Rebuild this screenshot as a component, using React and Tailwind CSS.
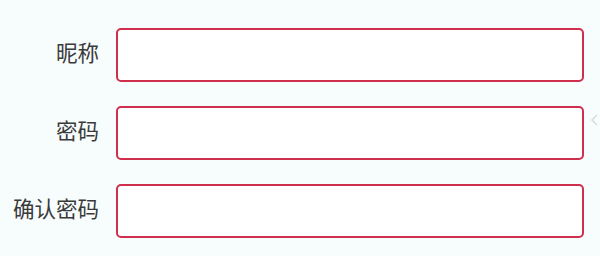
import React from 'react';

const fields = [
  { key: 'nickname', label: '昵称', type: 'text' },
  { key: 'password', label: '密码', type: 'password' },
  { key: 'confirm', label: '确认密码', type: 'password' },
];

export default function App() {
  return (
    <div
      className="relative w-[600px] h-[256px] overflow-hidden bg-[#f7fcfd] pt-[28px]"
      style={{ fontFamily: '"Noto Sans CJK SC", "Noto Sans", sans-serif' }}
    >
      <form className="flex flex-col gap-[24px]">
        {fields.map((f) => (
          <div key={f.key} className="flex items-center">
            <label className="w-[99px] pb-[6px] text-right text-[21.5px] leading-none font-normal text-[#3a3a3a]">
              {f.label}
            </label>
            <input
              type={f.type}
              className="ml-[17px] w-[468px] h-[54px] rounded-[5px] border-2 border-[#cf2f4d] bg-white px-3 text-[18px] outline-none"
            />
          </div>
        ))}
      </form>

      {/* small collapse arrow at the right edge */}
      <svg
        className="absolute left-[590px] top-[114px]"
        width="8"
        height="12"
        viewBox="0 0 8 12"
        fill="none"
      >
        <path d="M7 1L2 6l5 5" stroke="#d6dde0" strokeWidth="1.5" />
      </svg>
    </div>
  );
}
